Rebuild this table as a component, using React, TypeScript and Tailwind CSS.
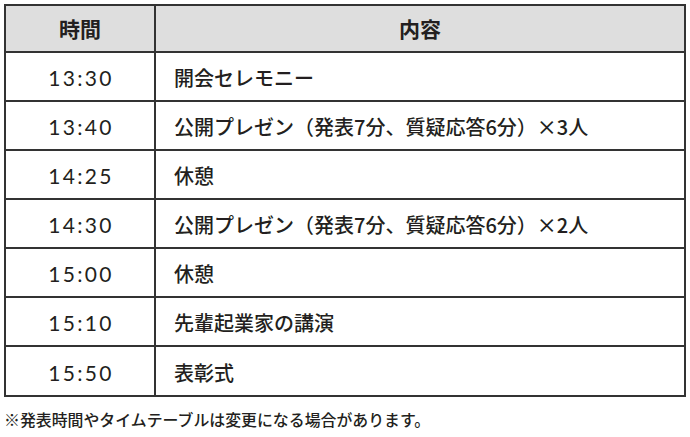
import React from "react";

const rows: [string, string][] = [
  ["13:30", "開会セレモニー"],
  ["13:40", "公開プレゼン（発表7分、質疑応答6分）×3人"],
  ["14:25", "休憩"],
  ["14:30", "公開プレゼン（発表7分、質疑応答6分）×2人"],
  ["15:00", "休憩"],
  ["15:10", "先輩起業家の講演"],
  ["15:50", "表彰式"],
];

const font = { fontFamily: '"Noto Sans CJK JP", sans-serif' };
const numFont = { fontFamily: 'Lato, "Noto Sans CJK JP", sans-serif' };

export default function App() {
  return (
    <div className="w-[690px] h-[437px] bg-white pl-[4px] pt-[4px] pr-[4px] text-[#231f20]" style={font}>
      <div className="w-[682px] border-2 border-[#333333] flex flex-col">
        <div className="flex h-[45px] bg-[#dedede]">
          <div className="w-[148px] flex items-center justify-center text-[21px] font-bold">時間</div>
          <div className="flex-1 border-l-2 border-[#333333] flex items-center justify-center text-[21px] font-bold">内容</div>
        </div>
        {rows.map(([t, c], i) => (
          <div
            key={i}
            className={`flex border-t-2 border-[#333333] ${i === rows.length - 1 ? "h-[50px]" : "h-[49px]"}`}
          >
            <div className="w-[148px] flex items-center justify-center text-[21px] tracking-[0.11em] pl-[2px] pt-[3px]" style={numFont}>
              {t}
            </div>
            <div className="flex-1 border-l-2 border-[#333333] flex items-center pl-[18px] text-[20px] font-medium pt-[3px]">
              {c}
            </div>
          </div>
        ))}
      </div>
      <div className="mt-[12px] text-[15.9px] leading-[22px] font-medium">※発表時間やタイムテーブルは変更になる場合があります。</div>
    </div>
  );
}
